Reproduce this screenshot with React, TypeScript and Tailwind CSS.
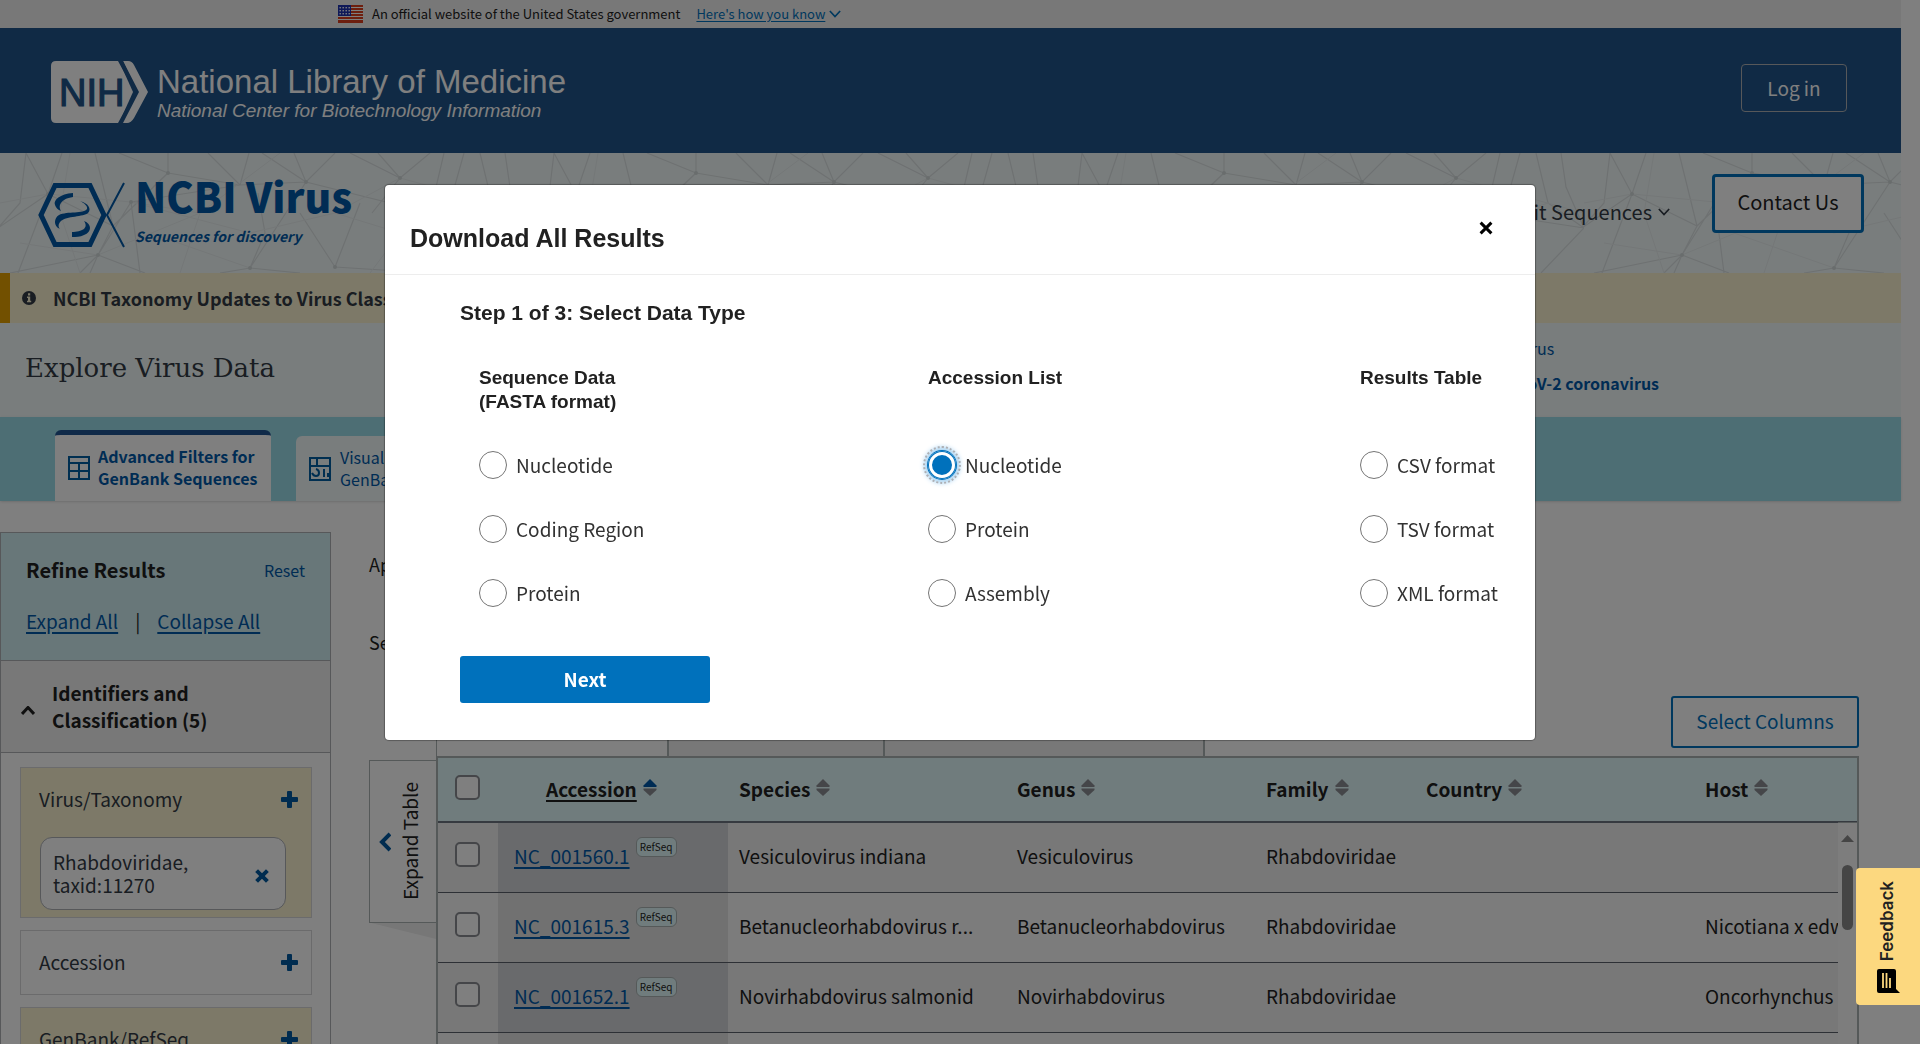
import type { ReactNode } from "react";

type RowData = {
  accession: string;
  species: string;
  genus: string;
  family: string;
  country: string;
  host: string;
};

const rows: RowData[] = [
  { accession: "NC_001560.1", species: "Vesiculovirus indiana", genus: "Vesiculovirus", family: "Rhabdoviridae", country: "", host: "" },
  { accession: "NC_001615.3", species: "Betanucleorhabdovirus r...", genus: "Betanucleorhabdovirus", family: "Rhabdoviridae", country: "", host: "Nicotiana x edwardsonii" },
  { accession: "NC_001652.1", species: "Novirhabdovirus salmonid", genus: "Novirhabdovirus", family: "Rhabdoviridae", country: "", host: "Oncorhynchus" },
  { accession: "", species: "", genus: "", family: "", country: "", host: "" },
];

const columns = ["Species", "Genus", "Family", "Country", "Host"];

const downloadGroups = [
  { title: "Sequence Data (FASTA format)", options: ["Nucleotide", "Coding Region", "Protein"] },
  { title: "Accession List", options: ["Nucleotide", "Protein", "Assembly"] },
  { title: "Results Table", options: ["CSV format", "TSV format", "XML format"] },
];

function Flag() {
  return (
    <svg width="25" height="18" viewBox="0 0 25 18" aria-hidden="true">
      <rect width="25" height="18" fill="#fff" />
      {[0, 3, 6, 9, 12, 15].map((y) => (
        <rect key={y} y={y} width="25" height="2" fill="#db3e1f" />
      ))}
      <rect y="17" width="25" height="1" fill="#db3e1f" />
      <rect width="13" height="11" fill="#1e33b1" />
      {[2, 5, 8].map((y) =>
        [2, 5, 8, 11].map((x) => <rect key={`${x}-${y}`} x={x - 0.5} y={y} width="1.4" height="1.4" fill="#fff" />),
      )}
    </svg>
  );
}

function NihMark() {
  return (
    <svg width="98" height="62" viewBox="0 0 98 62" aria-label="NIH" role="img">
      <path d="M5 0H68L82 31L68 62H5Q0 62 0 57V5Q0 0 5 0Z" fill="#fff" />
      <path d="M72 0H77Q81 0 83 4L97 31L83 57Q80 62 76 62H72H68L86 31Z" fill="#fff" />
      <path d="M67 0H72L88 31L72 62H67L84 31Z" fill="#20558a" />
      <text x="8" y="45" fontFamily="Liberation Sans, Arial, sans-serif" fontSize="38" fill="#20558a" stroke="#20558a" strokeWidth="1.2">
        NIH
      </text>
    </svg>
  );
}

function VirusMark() {
  return (
    <svg className="mt-[7px]" width="88" height="66" viewBox="0 0 88 66" fill="none" aria-hidden="true">
      <path d="M17 3.500H52L66 33L52 62.500H17L3 33Z" stroke="#0059a8" strokeWidth="5" />
      <path d="M86 1L69 33L86 65" stroke="#0059a8" strokeWidth="2" />
      <path d="M35 11C22 12 15 18 17 23C18 26 20 28 23 29C20 24 22 17 35 15Z" fill="#0059a8" />
      <path d="M42 19C50 21 54 27 50 31C46 35 28 34 23 39C20 42 20 45 22 47C15 44 16 36 21 33C29 29 46 32 49 27C50 24 46 21 42 19Z" fill="#0059a8" />
      <path d="M46 39C54 42 54 50 46 53C42 55 38 55 34 55V50C44 50 51 46 46 39Z" fill="#0059a8" />
    </svg>
  );
}

function NetworkBackdrop() {
  return (
    <svg className="absolute inset-0 h-full w-full" aria-hidden="true">
      <defs>
        <pattern id="mesh" width="528" height="120" patternUnits="userSpaceOnUse">
          <g stroke="#dde3e4" strokeWidth="1.2" fill="none">
            <path d="M119 0L168 20L240 32L306 29L335 0M168 0V20L153 34M240 32L208 0M240 32L249 0M240 32L131 49M306 29L262 0M306 29L294 0M306 29L430 60M400 25L350 0M400 25L378 0M400 25L430 0M400 25L372 60M48 41L26 0M48 41L62 0M48 41L-2 75M48 41L113 73L98 102M48 41L18 120M113 73L95 0M113 73L168 20M98 102L10 120M98 102L90 120M98 102L80 120M98 102L145 120M131 49L140 120M131 49L98 102M250 115L306 29M250 115L265 80L258 40M250 115L220 120M250 115L300 120M335 114L360 50M335 114L300 60M335 114L430 120M444 0L430 60L528 75M480 0L492 50L528 75M505 0L510 34L528 75M528 75L485 120M464 0L450 50L430 60L410 120M-2 75L20 50L26 0" />
          </g>
          <g stroke="#e9eff0" strokeWidth="1" fill="none">
            <path d="M0 50L48 41L131 49L250 80L335 60L400 25L528 60M70 0L60 60L80 120M180 120L200 60L280 0M200 60L131 49M370 120L400 80L492 50M400 80L335 60M150 80L250 115M20 90L98 102L200 60" />
          </g>
          <g fill="#d3dadb">
            <circle cx="168" cy="20" r="2" />
            <circle cx="306" cy="29" r="2" />
            <circle cx="400" cy="25" r="2" />
            <circle cx="48" cy="41" r="2" />
            <circle cx="98" cy="102" r="2" />
            <circle cx="131" cy="49" r="2" />
            <circle cx="250" cy="115" r="2" />
            <circle cx="335" cy="114" r="2" />
          </g>
        </pattern>
      </defs>
      <rect width="100%" height="100%" fill="url(#mesh)" />
    </svg>
  );
}

function Chevron({ className }: { className: string }) {
  return (
    <svg className={className} viewBox="0 0 14 9" fill="none" stroke="currentColor" strokeWidth="2" aria-hidden="true">
      <path d="M1 1L7 7.500L13 1" />
    </svg>
  );
}

function Plus() {
  return (
    <svg className="size-[17px]" viewBox="0 0 17 17" fill="#0059a0" aria-hidden="true">
      <path d="M7 0H10Q11 0 11 1V6H16Q17 6 17 7V10Q17 11 16 11H11V16Q11 17 10 17H7Q6 17 6 16V11H1Q0 11 0 10V7Q0 6 1 6H6V1Q6 0 7 0Z" />
    </svg>
  );
}

function Cross({ className }: { className: string }) {
  return (
    <svg className={className} viewBox="0 0 14 14" stroke="currentColor" aria-hidden="true">
      <path d="M1.600 1.600L12.400 12.400M12.400 1.600L1.600 12.400" />
    </svg>
  );
}

function SortIcon({ active }: { active?: boolean }) {
  return (
    <svg className="mb-1 h-[17px] w-[14px]" viewBox="0 0 14 17" aria-hidden="true">
      <path d="M7 0L13.500 6.500V8H0.500V6.500Z" fill={active ? "#0059a8" : "#8b8d92"} />
      <path d="M0.500 9.500H13.500V11L7 17L0.500 11Z" fill="#8b8d92" />
    </svg>
  );
}

function TableIcon() {
  return (
    <svg className="size-6 shrink-0" viewBox="0 0 24 24" fill="none" stroke="#005ea2" strokeWidth="2" aria-hidden="true">
      <path d="M2 1H22V23H2ZM1 7H23M1 15H23M12 7V23" />
    </svg>
  );
}

function DashboardIcon() {
  return (
    <svg className="size-6 shrink-0" viewBox="0 0 24 24" fill="none" stroke="#005ea2" strokeWidth="2" aria-hidden="true">
      <path d="M2 1H22V23H2ZM1 9H23M9 1V9M16 12V20M20 16V20" />
      <path d="M8 12C12 13 12 19 8 19C6 19 5 18 4 16" />
    </svg>
  );
}

function FilterCard({ label, tinted, children }: { label: string; tinted?: boolean; children?: ReactNode }) {
  return (
    <div className={`border border-[#d6d7d9] ${tinted ? "bg-[#faf3d1]" : "bg-white"}`}>
      <div className="flex h-[63px] items-center justify-between pr-[13px] pl-[18px]">
        <span className="text-[#323a45]">{label}</span>
        <button type="button" aria-label={`Expand ${label}`}>
          <Plus />
        </button>
      </div>
      {children}
    </div>
  );
}

function Sidebar() {
  return (
    <aside className="mt-[31px] w-[331px] shrink-0 border border-[#aeb0b5] bg-white text-[19px]">
      <div className="h-[128px] border-b border-[#aeb0b5] bg-[#d0eef2] px-[25px] pt-[22px]">
        <div className="flex h-[30px] items-center justify-between">
          <h2 className="text-xl font-bold">Refine Results</h2>
          <button type="button" className="text-base text-[#0059a8]">Reset</button>
        </div>
        <div className="mt-[21px] flex h-[30px] items-center gap-[17px] text-[#0059a8]">
          <a href="#expand" className="underline decoration-2 underline-offset-3">Expand All</a>
          <span className="text-[#212121]">|</span>
          <a href="#collapse" className="underline decoration-2 underline-offset-3">Collapse All</a>
        </div>
      </div>
      <button type="button" className="flex h-[92px] w-full items-center border-b border-[#aeb0b5] bg-[#f1f1f1] pb-0.5 pl-5 text-left font-bold">
        <Chevron className="mt-2.5 h-[9px] w-[14px] rotate-180 stroke-[3]" />
        <span className="ml-[17px] w-[180px] leading-[27px]">Identifiers and Classification (5)</span>
      </button>
      <div className="flex flex-col gap-3 py-[14px] pr-[18px] pl-[19px]">
        <FilterCard label="Virus/Taxonomy" tinted>
          <div className="mt-[6px] mr-[25px] mb-[7px] ml-[19px] flex h-[73px] items-center justify-between rounded-xl border border-[#aeb0b5] bg-white pr-4 pb-0.5 pl-3 leading-[23px]">
            <span className="w-[150px] text-[#323a45]">Rhabdoviridae, taxid:11270</span>
            <button type="button" aria-label="Remove Rhabdoviridae" className="mt-1.5 text-[#0059a0]">
              <Cross className="size-[14px] stroke-[4]" />
            </button>
          </div>
        </FilterCard>
        <FilterCard label="Accession" />
        <FilterCard label="GenBank/RefSeq" tinted />
      </div>
    </aside>
  );
}

function CheckBox({ label }: { label: string }) {
  return (
    <input
      type="checkbox"
      aria-label={label}
      className="mb-1 ml-[17px] block size-[25px] appearance-none rounded-[5px] border-2 border-[#8b8d92] bg-white"
    />
  );
}

function ResultsTable() {
  return (
    <div className="relative overflow-hidden border-2 border-b-0 border-[#aab3b3]">
      <table className="w-full table-fixed border-separate border-spacing-0 text-left text-[19px]">
        <colgroup>
          <col className="w-[60px]" />
          <col className="w-[230px]" />
          <col className="w-[278px]" />
          <col className="w-[249px]" />
          <col className="w-[160px]" />
          <col className="w-[279px]" />
          <col />
        </colgroup>
        <thead>
          <tr className="h-[65px] bg-[#e1f9fb]">
            <th className="border-b-2 border-[#6c7480]"><CheckBox label="Select all" /></th>
            <th className="border-b-2 border-[#6c7480] pl-12">
              <button type="button" className="flex items-center gap-1.5 font-bold">
                <span className="underline decoration-2 underline-offset-3">Accession</span>
                <SortIcon active />
              </button>
            </th>
            {columns.map((name) => (
              <th key={name} className="border-b-2 border-[#6c7480] px-[11px]">
                <button type="button" className="flex items-center gap-1.5 font-bold">
                  {name}
                  <SortIcon />
                </button>
              </th>
            ))}
          </tr>
        </thead>
        <tbody>
          {rows.map((row) => (
            <tr key={row.accession} className="group h-[70px] odd:bg-[#f1f1f1] even:bg-[#f9f9f9]">
              <td className="border-b border-[#5b616b] pb-0.5"><CheckBox label={`Select ${row.accession}`} /></td>
              <td className="border-b border-[#5b616b] pb-0.5 pl-4 group-odd:bg-[#d3d5d9] group-even:bg-[#e2e2e2]">
                {row.accession && (
                  <div className="flex items-center gap-1.5">
                    <a href={`#${row.accession}`} className="text-[#0059a8] underline decoration-2 underline-offset-3">{row.accession}</a>
                    <span className="mb-5 flex h-5 w-[41px] items-center justify-center rounded-md border border-[#aab3b3] bg-[#e1f9fb] text-[10px]">
                      RefSeq
                    </span>
                  </div>
                )}
              </td>
              <td className="truncate border-b border-[#5b616b] px-[11px] pb-0.5">{row.species}</td>
              <td className="border-b border-[#5b616b] px-[11px] pb-0.5">{row.genus}</td>
              <td className="border-b border-[#5b616b] px-[11px] pb-0.5">{row.family}</td>
              <td className="border-b border-[#5b616b] px-[11px] pb-0.5">{row.country}</td>
              <td className="overflow-hidden border-b border-[#5b616b] pb-0.5 pl-[11px] whitespace-nowrap">{row.host}</td>
            </tr>
          ))}
        </tbody>
      </table>
      <div className="absolute top-16 right-0 bottom-0 flex w-[19px] flex-col items-center border-t border-[#aab3b3] bg-[#fbfbfb]">
        <svg className="mt-3 h-[7px] w-[13px]" viewBox="0 0 13 7" fill="#8b8b8b" aria-hidden="true">
          <path d="M0 7L6.500 0L13 7Z" />
        </svg>
        <div className="mt-[23px] h-[65px] w-[11px] rounded-full bg-[#8b8b8b]" />
      </div>
    </div>
  );
}

function DownloadDialog() {
  return (
    <div className="fixed inset-0 z-20 flex items-start justify-center bg-black/50 pt-[185px]">
      <section
        role="dialog"
        aria-modal="true"
        aria-labelledby="dialog-title"
        className="w-[1150px] max-w-full rounded-sm bg-white shadow-[0_0_1px_1px_rgba(0,0,0,0.3)]"
      >
        <header className="flex h-[90px] items-center justify-between border-b border-[#ededed] pt-[18px] pr-[42px] pl-[25px] text-[#212121]">
          <h1 id="dialog-title" className="font-['Liberation_Sans',Arial,sans-serif] text-[25px] font-bold">Download All Results</h1>
          <button type="button" aria-label="Close" className="mb-[22px] text-black">
            <Cross className="size-[14px] stroke-[3]" />
          </button>
        </header>
        <form className="px-[75px] pt-6 pb-[37px]">
          <h2 className="font-['Liberation_Sans',Arial,sans-serif] text-[21px] leading-7 font-bold text-[#212121]">
            Step 1 of 3: Select Data Type
          </h2>
          <div className="mt-[39px] grid grid-cols-[449px_432px_1fr] pl-[19px]">
            {downloadGroups.map((group) => (
              <fieldset key={group.title} className="min-w-0">
                <legend className="h-12 w-[160px] font-['Liberation_Sans',Arial,sans-serif] text-[19px] leading-6 font-bold text-[#212121]">
                  {group.title}
                </legend>
                <div className="mt-[37px] flex flex-col gap-9">
                  {group.options.map((option) => (
                    <label key={option} className="flex h-7 items-center gap-[9px] text-[19px] whitespace-nowrap text-[#323232]">
                      <input
                        type="radio"
                        name="data-type"
                        defaultChecked={group.title === "Accession List" && option === "Nucleotide"}
                        className="size-7 shrink-0 appearance-none rounded-full border border-[#757575] bg-white checked:border-0 checked:bg-[#0071bc] checked:shadow-[inset_0_0_0_1px_#0071bc,inset_0_0_0_4px_#fff,0_0_0_1px_#0071bc,0_0_5px_4px_#a8d3f2] checked:outline-2 checked:outline-offset-3 checked:outline-[#aeb0b5] checked:outline-dotted"
                      />
                      {option}
                    </label>
                  ))}
                </div>
              </fieldset>
            ))}
          </div>
          <button type="button" className="mt-[49px] h-[47px] w-[250px] rounded-[3px] bg-[#0071bc] text-[19px] font-bold text-white">
            Next
          </button>
        </form>
      </section>
    </div>
  );
}

export default function App() {
  return (
    <div className="h-screen overflow-hidden bg-white pr-[19px] font-['Noto_Sans_CJK_SC','Open_Sans',sans-serif] text-[#212121]">
      <div className="flex h-7 items-center bg-[#f1f1f1] pl-[338px] text-[13px]">
        <Flag />
        <span className="ml-[9px]">An official website of the United States government</span>
        <button type="button" className="ml-4 flex items-center text-[#0071bc]">
          <span className="underline underline-offset-2">Here's how you know</span>
          <Chevron className="ml-1 h-2 w-3" />
        </button>
      </div>

      <header className="flex h-[125px] items-start justify-between bg-[#20558a] pr-[54px] pl-[51px] text-white">
        <a href="#nlm" className="mt-[33px] flex items-center gap-2">
          <NihMark />
          <span className="pt-1 font-['Liberation_Sans',Arial,sans-serif]">
            <span className="block text-[33px] leading-[34px]">National Library of Medicine</span>
            <span className="block text-[19px] leading-6 italic">National Center for Biotechnology Information</span>
          </span>
        </a>
        <button type="button" className="mt-9 h-12 w-[106px] rounded-[4px] border border-[#aeb0b5] text-[19px]">Log in</button>
      </header>

      <div className="relative h-[120px] bg-[#f2fafa]">
        <NetworkBackdrop />
        <div className="relative flex h-full justify-between pr-[37px] pl-[38px]">
          <a href="#virus" className="mt-[22px] flex items-start gap-[9px] text-[#0059a8]">
            <VirusMark />
            <span>
              <span className="block text-[41px] leading-10 font-black">NCBI Virus</span>
              <span className="mt-[9px] block text-sm leading-6 font-bold italic">Sequences for discovery</span>
            </span>
          </a>
          <nav className="flex items-start">
            <button type="button" className="mt-11 flex h-[30px] items-center gap-1.5 text-xl text-[#323a45]">
              Submit Sequences
              <Chevron className="h-2 w-3" />
            </button>
            <a href="#contact" className="mt-[21px] ml-[42px] flex h-[59px] w-[152px] items-center justify-center rounded-[4px] border-[3px] border-[#0071bc] bg-white pb-1 text-xl">
              Contact Us
            </a>
          </nav>
        </div>
      </div>

      <div className="flex h-[50px] items-center border-l-[10px] border-[#e5a000] bg-[#faf3d1] pl-3 text-lg font-bold text-[#323a45]">
        <svg className="size-[14px]" viewBox="0 0 14 14" aria-hidden="true">
          <circle cx="7" cy="7" r="7" fill="#323a45" />
          <path d="M6 2.200H8.200V4.400H6ZM5 5.500H8.200V9.800H9.200V11.300H5V9.800H6V7H5Z" fill="#faf3d1" />
        </svg>
        <span className="ml-[17px]">NCBI Taxonomy Updates to Virus Classification</span>
      </div>

      <div className="flex h-[94px] justify-between bg-[#f2fafa] pr-[242px] pl-[25px]">
        <h1 className="pt-[29px] font-['DejaVu_Serif',serif] text-[26px] leading-8 text-[#323a45]">Explore Virus Data</h1>
        <div className="flex flex-col pt-2 text-base leading-[35px] text-[#0059a8]">
          <a href="#about">About virus</a>
          <a href="#sars" className="font-bold">SARS-CoV-2 coronavirus</a>
        </div>
      </div>

      <div className="flex h-[84px] items-end bg-[#9adde8] pl-[55px] text-base leading-[22px] text-[#0059a8] shadow-sm">
        <button type="button" className="flex h-[71px] w-[216px] items-center gap-[7px] rounded-t-md border-t-[5px] border-[#205493] bg-white pl-3 text-left font-bold">
          <TableIcon />
          <span className="pb-0.5">Advanced Filters for GenBank Sequences</span>
        </button>
        <button type="button" className="ml-[25px] flex h-[65px] w-[216px] items-center gap-2 rounded-t-md bg-[#f2fafa] pl-3 text-left">
          <DashboardIcon />
          <span className="pb-0.5">Visual Filters for GenBank Genomes</span>
        </button>
      </div>

      <div className="flex items-start gap-[38px] pr-[42px]">
        <Sidebar />
        <main className="min-w-0 flex-1">
          <div className="mt-[48px] text-lg leading-[30px]">Applied filters</div>
          <div className="mt-[48px] text-lg leading-[30px]">Selected results</div>
          <div className="mt-[39px] flex h-[60px] items-start justify-between">
            <div className="ml-[67px] flex h-[60px] w-[769px] border-l border-[#aab3b3]">
              <div className="w-[230px]" />
              <div className="w-[216px] border-l-2 border-[#aab3b3] bg-[#f1f1f1]" />
              <div className="flex-1 border-x-2 border-[#aab3b3] bg-[#f1f1f1]" />
            </div>
            <button type="button" className="h-[52px] w-[188px] rounded-[3px] border-2 border-[#0071bc] pb-0.5 text-[19px] text-[#0071bc]">
              Select Columns
            </button>
          </div>
          <div className="flex items-start">
            <div className="mt-1 flex w-[67px] shrink-0 flex-col">
              <button type="button" className="flex h-[163px] items-center gap-[5px] border border-r-0 border-[#aab3b3] pl-[9px]">
                <svg className="h-5 w-3" viewBox="0 0 12 20" fill="none" stroke="#0059a0" strokeWidth="4" aria-hidden="true">
                  <path d="M11 2L3 10L11 18" />
                </svg>
                <span className="rotate-180 text-[19px] [writing-mode:vertical-rl]">Expand Table</span>
              </button>
              <svg className="h-4 w-[67px]" viewBox="0 0 67 16" aria-hidden="true">
                <path d="M2 0H67V16Z" fill="#efefef" />
              </svg>
            </div>
            <div className="min-w-0 flex-1">
              <ResultsTable />
            </div>
          </div>
        </main>
      </div>

      <DownloadDialog />

      <button type="button" className="fixed right-0 bottom-[39px] z-30 flex h-[137px] w-16 flex-col items-center justify-end gap-2 rounded-l-[4px] bg-[#fcd87f] pb-3">
        <span className="rotate-180 font-[Inter,sans-serif] text-[17px] font-semibold text-[#212121] [writing-mode:vertical-rl]">Feedback</span>
        <svg className="size-6" viewBox="0 0 24 24" aria-hidden="true">
          <path d="M3 0H18Q20 0 20 2V20L24 24H3Q1 24 1 22V2Q1 0 3 0Z" fill="#000" />
          <path d="M7 4V19M10.500 4V19M14 9V19" stroke="#fcd87f" strokeWidth="1.800" />
        </svg>
      </button>
    </div>
  );
}
